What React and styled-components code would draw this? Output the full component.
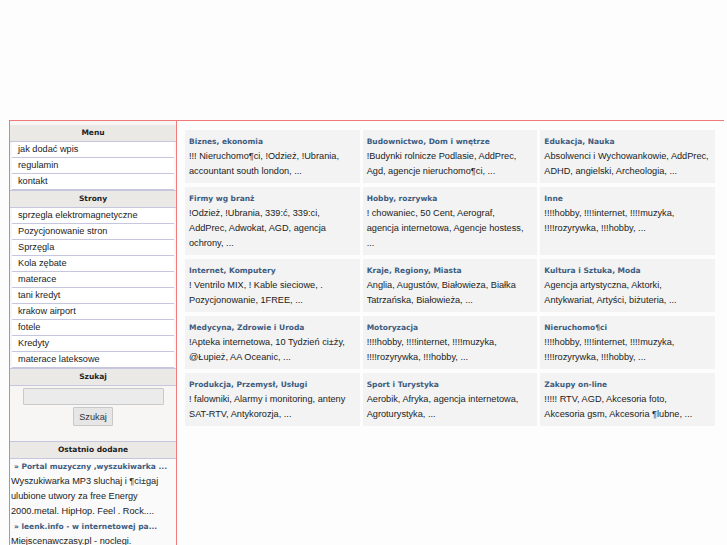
import styled, { createGlobalStyle } from "styled-components";

const GlobalStyle = createGlobalStyle`
  html, body {
    margin: 0;
    padding: 0;
    background: #fdfdfd;
  }
  body {
    font-family: "Liberation Sans", Arial, sans-serif;
    color: #222;
  }
`;

const menu = ["jak dodać wpis", "regulamin", "kontakt"];

const strony = [
  "sprzegla elektromagnetyczne",
  "Pozycjonowanie stron",
  "Sprzęgla",
  "Kola zębate",
  "materace",
  "tani kredyt",
  "krakow airport",
  "fotele",
  "Kredyty",
  "materace lateksowe",
];

const ostatnie = [
  {
    tytul: "» Portal muzyczny ,wyszukiwarka ...",
    opis: "Wyszukiwarka MP3 sluchaj i ¶ci±gaj\nulubione utwory za free Energy\n2000.metal. HipHop. Feel . Rock....",
  },
  {
    tytul: "» leenk.info - w internetowej pa...",
    opis: "Miejscenawczasy.pl - noclegi.",
  },
];

const kategorie = [
  { tytul: "Biznes, ekonomia", opis: "!!! Nieruchomo¶ci, !Odzież, !Ubrania,\naccountant south london, ..." },
  { tytul: "Budownictwo, Dom i wnętrze", opis: "!Budynki rolnicze Podlasie, AddPrec,\nAgd, agencje nieruchomo¶ci, ..." },
  { tytul: "Edukacja, Nauka", opis: "Absolwenci i Wychowankowie, AddPrec,\nADHD, angielski, Archeologia, ..." },
  { tytul: "Firmy wg branż", opis: "!Odzież, !Ubrania, 339:ć, 339:ci,\nAddPrec, Adwokat, AGD, agencja\nochrony, ..." },
  { tytul: "Hobby, rozrywka", opis: "! chowaniec, 50 Cent, Aerograf,\nagencja internetowa, Agencje hostess,\n..." },
  { tytul: "Inne", opis: "!!!!hobby, !!!!internet, !!!!muzyka,\n!!!!rozyrywka, !!!hobby, ..." },
  { tytul: "Internet, Komputery", opis: "! Ventrilo MIX, ! Kable sieciowe, .\nPozycjonowanie, 1FREE, ..." },
  { tytul: "Kraje, Regiony, Miasta", opis: "Anglia, Augustów, Białowieza, Białka\nTatrzańska, Białowieża, ..." },
  { tytul: "Kultura i Sztuka, Moda", opis: "Agencja artystyczna, Aktorki,\nAntykwariat, Artyści, biżuteria, ..." },
  { tytul: "Medycyna, Zdrowie i Uroda", opis: "!Apteka internetowa, 10 Tydzień ci±ży,\n@Łupież, AA Oceanic, ..." },
  { tytul: "Motoryzacja", opis: "!!!!hobby, !!!!internet, !!!!muzyka,\n!!!!rozyrywka, !!!hobby, ..." },
  { tytul: "Nieruchomo¶ci", opis: "!!!!hobby, !!!!internet, !!!!muzyka,\n!!!!rozyrywka, !!!hobby, ..." },
  { tytul: "Produkcja, Przemysł, Usługi", opis: "! falowniki, Alarmy i monitoring, anteny\nSAT-RTV, Antykorozja, ..." },
  { tytul: "Sport i Turystyka", opis: "Aerobik, Afryka, agencja internetowa,\nAgroturystyka, ..." },
  { tytul: "Zakupy on-line", opis: "!!!!! RTV, AGD, Akcesoria foto,\nAkcesoria gsm, Akcesoria ¶lubne, ..." },
];

export default function App() {
  return (
    <>
      <GlobalStyle />
      <Strona>
        <Uklad>
          <Boczny>
            <Sekcja>
              <Naglowek>Menu</Naglowek>
              <Lista>
                {menu.map((m) => (
                  <Pozycja key={m}>{m}</Pozycja>
                ))}
              </Lista>
            </Sekcja>
            <Sekcja>
              <Naglowek>Strony</Naglowek>
              <Lista>
                {strony.map((s) => (
                  <Pozycja key={s}>{s}</Pozycja>
                ))}
              </Lista>
            </Sekcja>
            <Sekcja>
              <Naglowek>Szukaj</Naglowek>
              <Szukajka>
                <Pole type="text" />
                <Przycisk>Szukaj</Przycisk>
              </Szukajka>
            </Sekcja>
            <Sekcja>
              <Naglowek $kreska>Ostatnio dodane</Naglowek>
              {ostatnie.map((o) => (
                <Wpis key={o.tytul}>
                  <WpisLink>{o.tytul}</WpisLink>
                  <WpisOpis>{o.opis}</WpisOpis>
                </Wpis>
              ))}
            </Sekcja>
          </Boczny>

          <Tresc>
            <Siatka>
              {kategorie.map((k) => (
                <Kategoria key={k.tytul}>
                  <Tytul>{k.tytul}</Tytul>
                  <Opis>{k.opis}</Opis>
                </Kategoria>
              ))}
            </Siatka>
          </Tresc>
        </Uklad>
      </Strona>
    </>
  );
}

// Styled Components
const Strona = styled.div`
  padding-top: 120px;
  margin: 0 3px 0 9px;
`;

const Uklad = styled.div`
  display: flex;
  border-top: 1px solid #f07a7a;
  min-height: 440px;
`;

const Boczny = styled.div`
  width: 166px;
  flex-shrink: 0;
  border-left: 1px solid #f07a7a;
  border-right: 1px solid #f07a7a;
  background: #f7f6f5;
  padding-top: 4px;
`;

const Sekcja = styled.div``;

const Naglowek = styled.div`
  height: 16px;
  line-height: 16px;
  background: #ebe9e6;
  border-top: ${(p) => (p.$kreska ? "1px solid #c6c6df" : "none")};
  border-bottom: 1px solid #c6c6df;
  text-align: center;
  font-family: "DejaVu Sans", Verdana, sans-serif;
  font-weight: bold;
  font-size: 7.5px;
  color: #222;
`;

const Lista = styled.div`
  border-bottom: 1px solid #c6c6df;
`;

const Pozycja = styled.div`
  height: 15px;
  line-height: 15px;
  margin: 0 2px;
  padding-left: 6px;
  background: #fff;
  border-bottom: 1px solid #c6c6df;
  font-size: 9.2px;
  white-space: nowrap;
`;

const Szukajka = styled.div`
  display: flex;
  flex-direction: column;
  align-items: center;
  gap: 2px;
  padding: 2px 0 15px;
`;

const Pole = styled.input`
  box-sizing: border-box;
  width: 141px;
  height: 17px;
  margin: 0;
  background: #ebebeb;
  border: 1px solid #c9c9c9;
  border-radius: 1px;
`;

const Przycisk = styled.button`
  box-sizing: border-box;
  width: 40px;
  height: 19px;
  padding: 0;
  background: #e6e6e6;
  border: 1px solid #c8c8c8;
  border-radius: 1px;
  font-family: "Liberation Sans", Arial, sans-serif;
  font-size: 9.2px;
  color: #333;
`;

const Wpis = styled.div`
  background: #fafafa;
`;

const WpisLink = styled.div`
  line-height: 15px;
  padding-left: 4px;
  font-family: "DejaVu Sans", Verdana, sans-serif;
  font-weight: bold;
  font-size: 7.5px;
  color: #3e5c80;
  white-space: nowrap;
`;

const WpisOpis = styled.div`
  line-height: 15px;
  padding-left: 1px;
  font-size: 9.2px;
  white-space: pre;
`;

const Tresc = styled.div`
  flex: 1;
  padding: 9px 9px 0 8px;
`;

const Siatka = styled.div`
  display: grid;
  grid-template-columns: repeat(3, 1fr);
  gap: 4px 3px;
`;

const Kategoria = styled.div`
  background: #f3f3f3;
  padding: 4px 4px 4px;
  line-height: 15px;
`;

const Tytul = styled.div`
  font-family: "DejaVu Sans", Verdana, sans-serif;
  font-weight: bold;
  font-size: 7.5px;
  color: #3e5c80;
`;

const Opis = styled.div`
  font-size: 9.2px;
  white-space: pre;
`;
